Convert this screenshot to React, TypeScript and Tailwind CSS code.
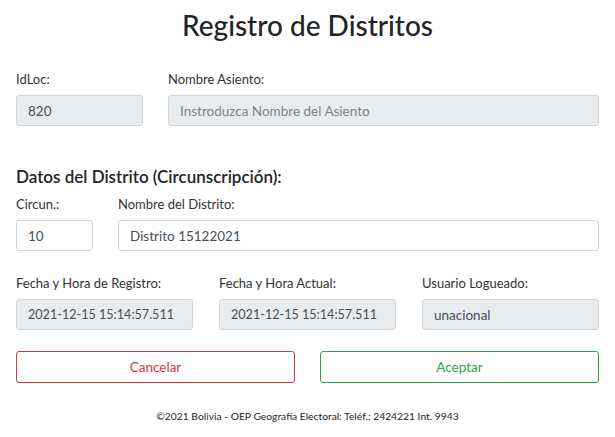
import React from "react";

const font = { fontFamily: 'Lato, "Noto Sans", sans-serif' };

function Field({ label, value, disabled, placeholder, small, className = "" }: { label: string; value?: string; disabled?: boolean; placeholder?: string; small?: boolean; className?: string }) {
  return (
    <div className={className}>
      <label className="block text-[13px] leading-[20px] text-[#333]">{label}</label>
      <input
        readOnly
        value={value ?? ""}
        placeholder={placeholder}
        className={`mt-[6px] block h-[31px] w-full rounded-[3px] border border-[#ced4da] px-[11px] text-[#495057] outline-none placeholder:text-[#7d848b] ${small ? "text-[12.6px]" : "text-[13.5px]"} ${disabled ? "bg-[#e9ecef]" : "bg-white"}`}
      />
    </div>
  );
}

export default function App() {
  return (
    <div style={font} className="min-h-[437px] w-[615px] bg-white px-4 text-[#212529]">
      <h2 className="pt-[8px] text-center text-[28px] font-medium leading-[34px]">Registro de Distritos</h2>

      <div className="mt-[27px] flex">
        <Field label="IdLoc:" value="820" disabled className="w-[127px]" />
        <Field label="Nombre Asiento:" placeholder="Instroduzca Nombre del Asiento" disabled className="ml-[25px] flex-1" />
      </div>

      <h5 className="mt-[40px] text-[17px] font-semibold leading-[22px]">Datos del Distrito (Circunscripción):</h5>

      <div className="mt-[6px] flex">
        <Field label="Circun.:" value="10" className="w-[77px]" />
        <Field label="Nombre del Distrito:" value="Distrito 15122021" className="ml-[25px] flex-1" />
      </div>

      <div className="mt-[22px] grid grid-cols-3 gap-[26px]">
        <Field label="Fecha y Hora de Registro:" value="2021-12-15 15:14:57.511" small disabled />
        <Field label="Fecha y Hora Actual:" value="2021-12-15 15:14:57.511" small disabled />
        <Field label="Usuario Logueado:" value="unacional" disabled />
      </div>

      <div className="mt-[21px] grid grid-cols-2 gap-[25px]">
        <button className="h-[32px] rounded-[3px] border border-[#dc3545] text-[13.5px] text-[#dc3545]">Cancelar</button>
        <button className="h-[32px] rounded-[3px] border border-[#28a745] text-[13.5px] text-[#28a745]">Aceptar</button>
      </div>

      <p className="mt-[26px] text-center text-[10.3px] text-[#212529]">©2021 Bolivia - OEP Geografía Electoral: Teléf.: 2424221 Int. 9943</p>
    </div>
  );
}
